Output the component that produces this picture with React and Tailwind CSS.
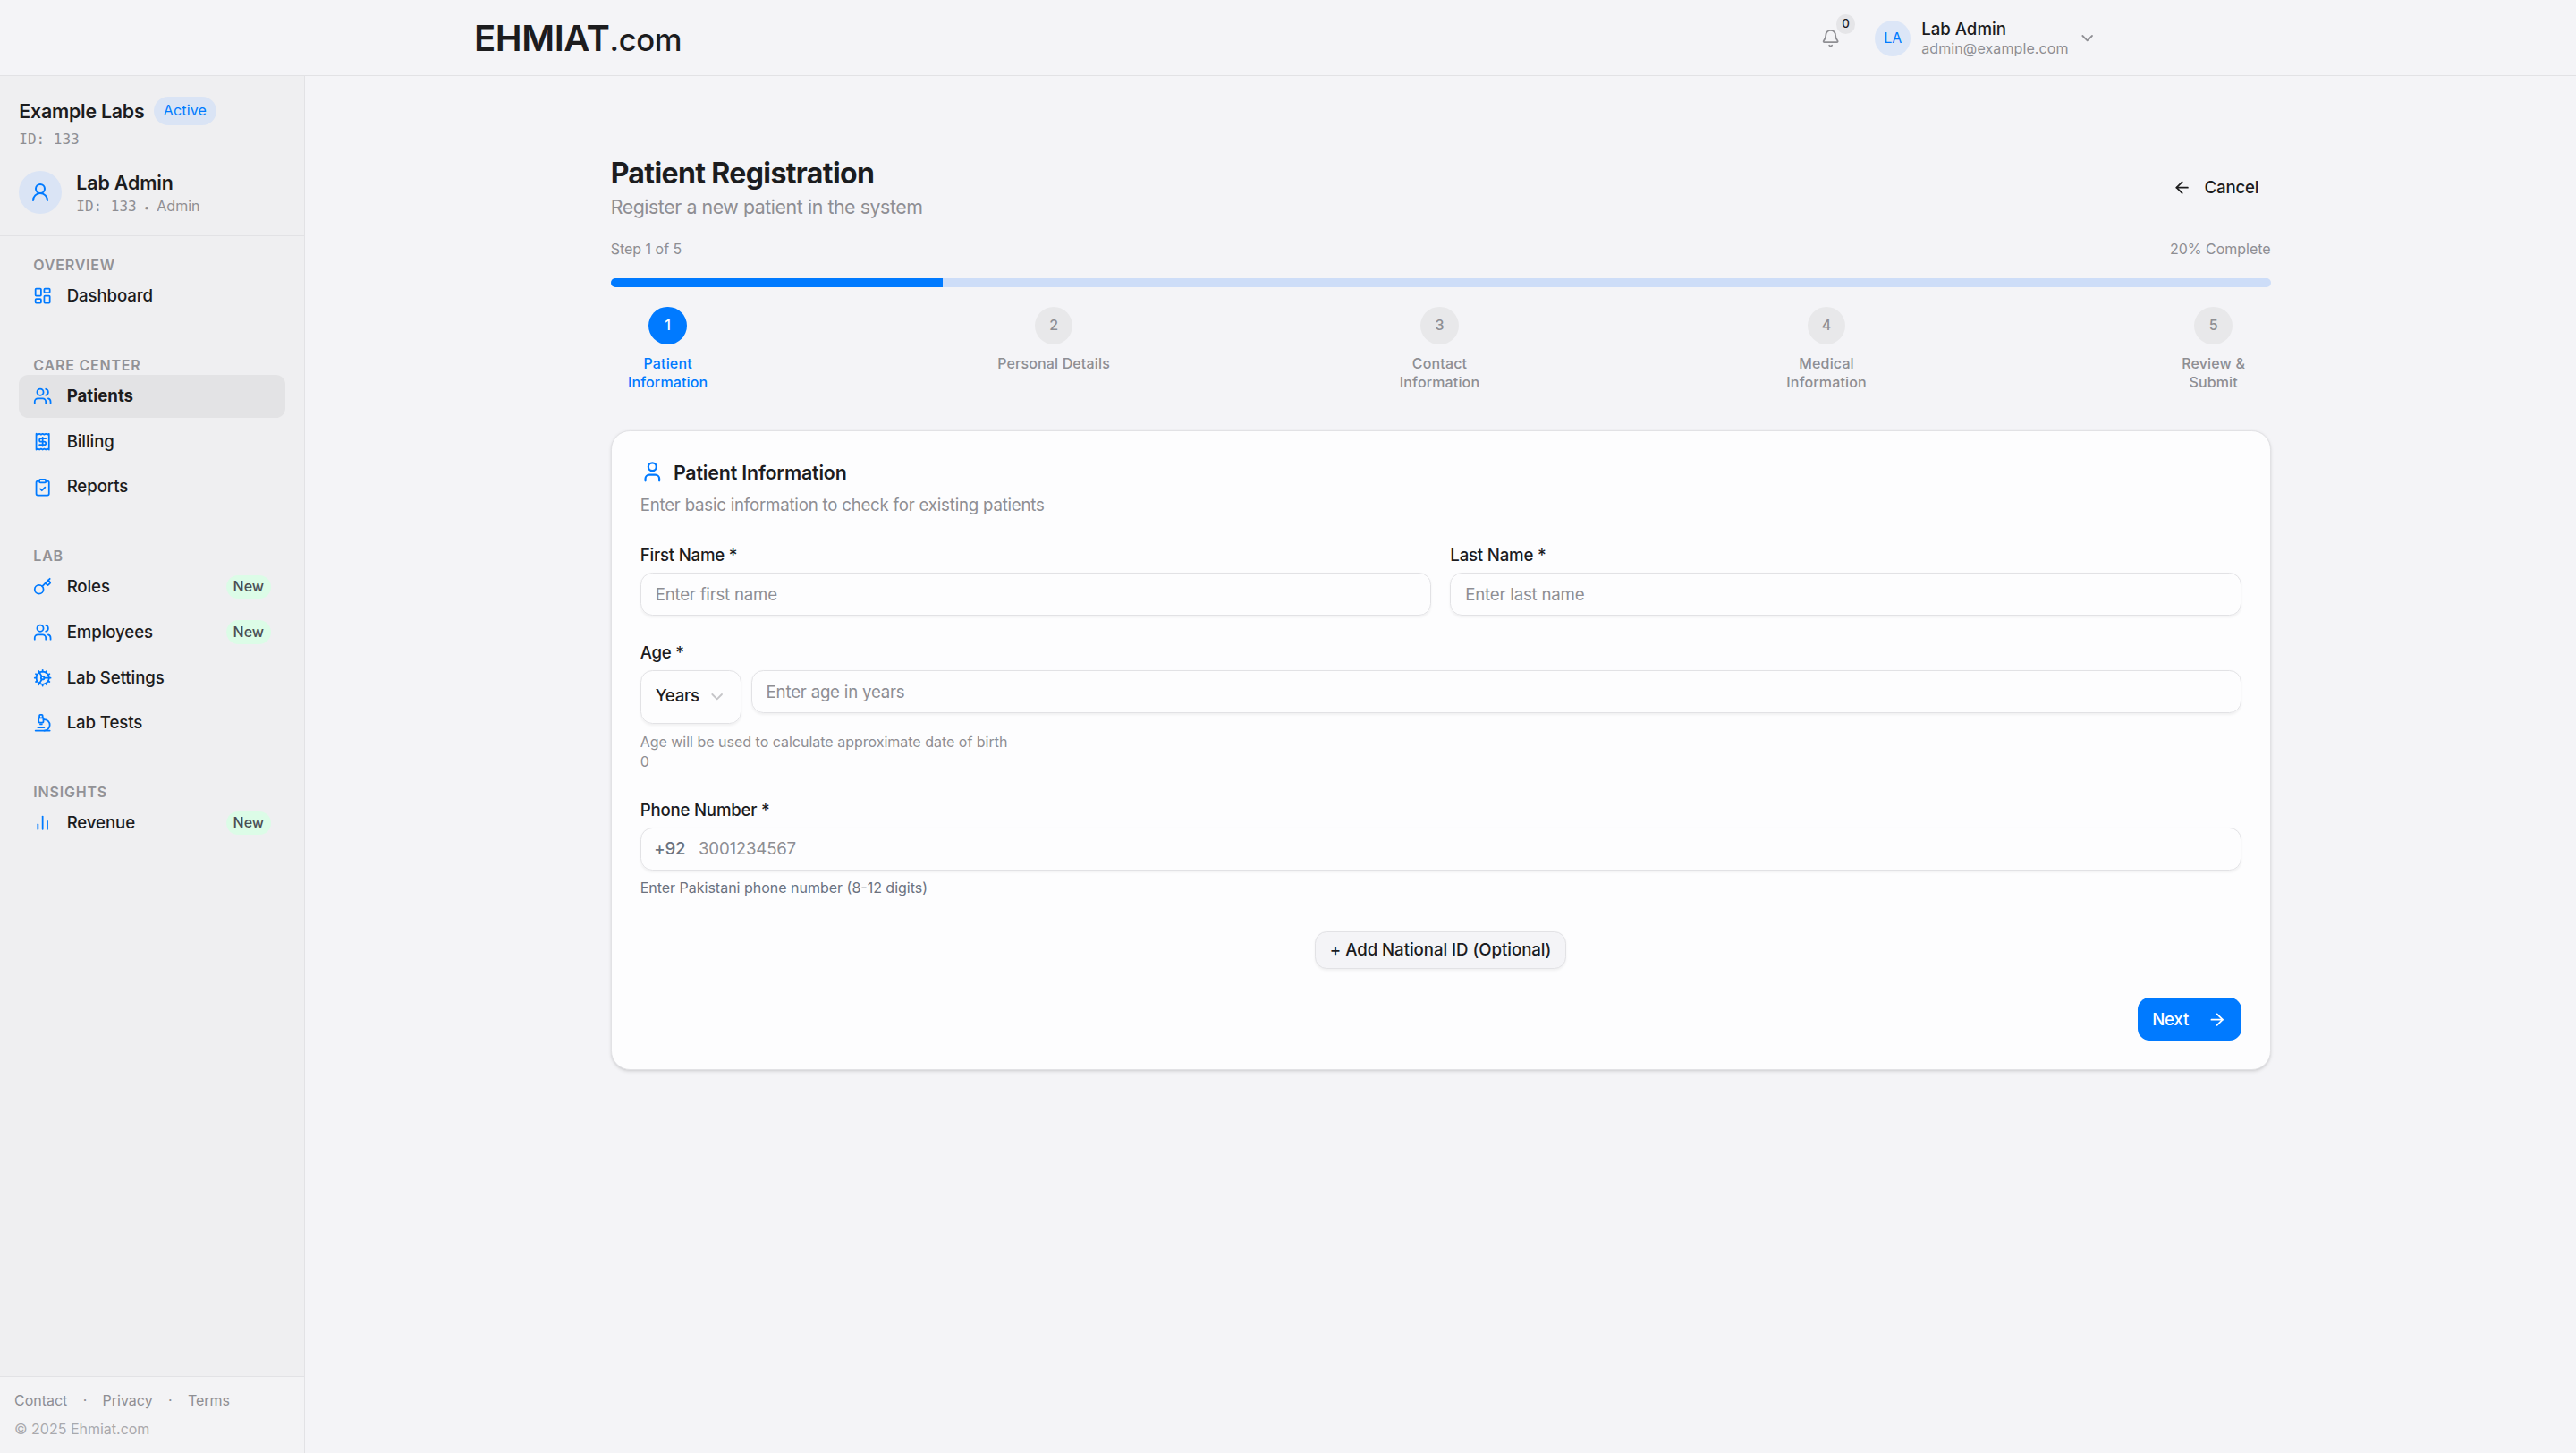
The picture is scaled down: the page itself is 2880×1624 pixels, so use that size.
import { useState } from "react";
import {
  ArrowLeft, ArrowRight, Bell, ChevronDown, ClipboardCheck, Cog, Key,
  LayoutDashboard, Microscope, User, UserRound, Users,
} from "lucide-react";

function ReceiptIcon({ className }) {
  return (
    <svg className={className} viewBox="0 0 24 24" fill="none" stroke="currentColor" strokeWidth="2" strokeLinecap="round" strokeLinejoin="round">
      <path d="M4 2v20l2-1 2 1 2-1 2 1 2-1 2 1 2-1 2 1V2l-2 1-2-1-2 1-2-1-2 1-2-1-2 1Z" />
      <path d="M16 8h-6a2 2 0 1 0 0 4h4a2 2 0 1 1 0 4H8" />
      <path d="M12 17.5v-11" />
    </svg>
  )
}

function BarsIcon({ className }) {
  return (
    <svg className={className} viewBox="0 0 24 24" fill="none" stroke="currentColor" strokeWidth="2" strokeLinecap="round" strokeLinejoin="round">
      <path d="M18 20V10" />
      <path d="M12 20V4" />
      <path d="M6 20v-6" />
    </svg>
  )
}

const sections = [
  { title: "OVERVIEW", items: [{ name: "Dashboard", icon: LayoutDashboard }] },
  {
    title: "CARE CENTER",
    items: [
      { name: "Patients", icon: Users, active: true },
      { name: "Billing", icon: ReceiptIcon },
      { name: "Reports", icon: ClipboardCheck },
    ],
  },
  {
    title: "LAB",
    items: [
      { name: "Roles", icon: Key, isNew: true },
      { name: "Employees", icon: Users, isNew: true },
      { name: "Lab Settings", icon: Cog },
      { name: "Lab Tests", icon: Microscope },
    ],
  },
  { title: "INSIGHTS", items: [{ name: "Revenue", icon: BarsIcon, isNew: true }] },
];

const steps = ["Patient Information", "Personal Details", "Contact Information", "Medical Information", "Review & Submit"];

function Header() {
  return (
    <header className="h-16 shrink-0 border-b border-[#e2e2e5] pt-px">
      <div className="mx-auto flex h-full w-[1365px] items-center justify-between">
        <div className="text-[30px] leading-none font-semibold tracking-[-0.01em]">EHMIAT<span className="text-[26px] font-medium">.com</span></div>
        <div className="flex items-center pr-[4px]">
          <div className="relative text-[#8e8e93]">
            <Bell className="size-4" />
            <span className="absolute -top-[12px] left-[13px] flex size-4 items-center justify-center rounded-full bg-[#e5e5e8] text-[10px] font-medium text-[#1c1c1e]">0</span>
          </div>
          <div className="ml-[29.5px] flex size-[30px] items-center justify-center rounded-full bg-[#dce6f7] text-xs text-[#007aff]">LA</div>
          <div className="ml-[9px] pt-[3px]">
            <p className="text-sm leading-4 font-medium">Lab Admin</p>
            <p className="text-xs leading-[18px] tracking-[0.0075em] text-[#8e8e93]">admin@example.com</p>
          </div>
          <ChevronDown className="ml-2 size-4 text-[#8e8e93]" />
        </div>
      </div>
    </header>
  )
}

function NavItem({ item }) {
  const Icon = item.icon
  return (
    <a className={item.active ? "flex h-9 items-center gap-3 rounded-lg bg-[#e3e3e5] px-3 font-bold" : "flex h-9 items-center gap-3 rounded-lg px-3 font-medium tracking-[-0.005em]"}>
      <Icon className="size-4 shrink-0 text-[#007aff]" />
      <span className="pt-px text-sm">{item.name}</span>
      {item.isNew && <span className="ml-auto rounded-full bg-[#dcfce7] px-1.5 py-0.5 text-xs tracking-normal text-[#4b4f52]">New</span>}
    </a>
  )
}

function Sidebar() {
  return (
    <aside className="flex w-64 shrink-0 flex-col border-r border-[#e2e2e5] bg-[#efeff1]">
      <div className="border-b border-[#e2e2e5] px-4 pt-[17px] pb-[15px]">
        <div className="flex h-6 items-center gap-2">
          <h2 className="pt-px text-base font-semibold tracking-[-0.01em]">Example Labs</h2>
          <span className="rounded-full bg-[#dae4f5] px-2 py-1 text-xs tracking-[0.01em] text-[#007aff]">Active</span>
        </div>
        <p className="mt-1 font-['DejaVu_Sans_Mono',monospace] text-xs text-[#8e8e93]">ID: 133</p>
        <div className="mt-4 flex items-center gap-3">
          <div className="mb-[1.5px] flex size-9 items-center justify-center rounded-full bg-[#dae4f5]">
            <UserRound className="size-[18px] text-[#007aff]" />
          </div>
          <div>
            <p className="text-base leading-[25px] font-semibold tracking-[-0.005em]">Lab Admin</p>
            <p className="text-xs leading-[15px] text-[#8e8e93]">
              <span className="font-['DejaVu_Sans_Mono',monospace]">ID: 133</span>
              <span className="inline-block w-[17px] text-center text-[8px]">•</span>
              Admin
            </p>
          </div>
        </div>
      </div>
      <nav className="flex flex-1 flex-col gap-8 p-4">
        {sections.map((s) => (
          <div key={s.title}>
            <p className="px-3 text-xs font-semibold tracking-[0.05em] text-[#929296]">{s.title}</p>
            <div className="flex flex-col gap-0.5">
              {s.items.map((item) => <NavItem key={item.name} item={item} />)}
            </div>
          </div>
        ))}
      </nav>
      <footer className="border-t border-[#e2e2e5] bg-[#f3f3f5] p-3 text-xs">
        <div className="flex gap-[13px] text-[#8e8e93]">
          <span>Contact</span><span>·</span><span>Privacy</span><span>·</span><span>Terms</span>
        </div>
        <p className="mt-2 text-[#a9a9ad]">© 2025 Ehmiat.com</p>
      </footer>
    </aside>
  )
}

function Field({ label, placeholder, value, onChange }) {
  return (
    <div className="flex-1">
      <label className="block h-3.5 text-sm leading-4 font-medium">{label}</label>
      <input
        className="mt-2 block h-9 w-full rounded-[10px] border border-[#e2e2e5] px-3 pt-px text-sm shadow-xs outline-none placeholder:text-[#8e8e93]"
        placeholder={placeholder}
        value={value}
        onChange={(e) => onChange(e.target.value)}
      />
    </div>
  )
}

export default function App() {
  const [firstName, setFirstName] = useState('')
  const [lastName, setLastName] = useState('')
  const [age, setAge] = useState('')
  const [phone, setPhone] = useState('')
  const step = 1

  return (
    <div className="flex h-[1218px] w-[2160px] flex-col overflow-hidden bg-[#f4f4f7] font-['Inter',sans-serif] text-[#1c1c1e] [zoom:1.33333]">
      <Header />
      <div className="flex min-h-0 flex-1">
        <Sidebar />
        <main className="flex-1 pt-[65px]">
          <div className="mx-auto w-[1392px]">
            <div className="flex items-center justify-between">
              <div>
                <h1 className="text-2xl leading-[33px] font-bold tracking-[-0.019em]">Patient Registration</h1>
                <p className="text-base leading-[23px] tracking-[-0.02em] text-[#8e8e93]">Register a new patient in the system</p>
              </div>
              <button className="flex h-9 items-center gap-[11px] px-2.5 pt-px text-sm font-medium tracking-[-0.01em]">
                <ArrowLeft className="size-4" />
                Cancel
              </button>
            </div>

            <div className="mt-4 flex justify-between text-xs text-[#8e8e93]">
              <span>Step 1 of 5</span>
              <span>20% Complete</span>
            </div>
            <div className="mt-4 h-2 overflow-hidden rounded-full bg-[#cdddf8]">
              <div className="h-full w-1/5 bg-[#007aff]" />
            </div>

            <div className="mt-4 flex justify-between">
              {steps.map((name, i) => (
                <div key={name} className={i + 1 === step ? "flex flex-col items-center text-[#007aff]" : "flex flex-col items-center text-[#8e8e93]"}>
                  <div className={i + 1 === step ? "flex size-8 items-center justify-center rounded-full bg-[#007aff] text-xs font-medium text-white" : "flex size-8 items-center justify-center rounded-full bg-[#e8e8ea] text-xs font-medium"}>{i + 1}</div>
                  <p className="mt-2 max-w-24 text-center text-xs font-medium tracking-[0.01em]">{name}</p>
                </div>
              ))}
            </div>

            <div className="mt-8 rounded-2xl border border-[#e2e2e5] bg-[#fdfdfe] p-6 tracking-[-0.01em] shadow-sm">
              <div className="flex h-5 gap-2">
                <User className="size-5 text-[#007aff]" />
                <h2 className="text-base leading-[22px] font-semibold tracking-[-0.007em]">Patient Information</h2>
              </div>
              <p className="mt-2 text-sm text-[#8e8e93]">Enter basic information to check for existing patients</p>

              <div className="mt-6 flex gap-4">
                <Field label="First Name *" placeholder="Enter first name" value={firstName} onChange={setFirstName} />
                <Field label="Last Name *" placeholder="Enter last name" value={lastName} onChange={setLastName} />
              </div>

              <div className="mt-6">
                <label className="block h-3.5 text-sm leading-4 font-medium">Age *</label>
                <div className="mt-2 flex items-start gap-2">
                  <button className="flex h-[45px] w-[85px] items-center justify-between rounded-[10px] border border-[#e2e2e5] px-3 text-sm font-medium shadow-xs">
                    Years
                    <ChevronDown className="size-4 text-[#8e8e93] opacity-50" />
                  </button>
                  <input
                    className="h-9 flex-1 rounded-[10px] border border-[#e2e2e5] px-3 pt-px text-sm shadow-xs outline-none placeholder:text-[#8e8e93]"
                    placeholder="Enter age in years"
                    value={age}
                    onChange={(e) => setAge(e.target.value)}
                  />
                </div>
                <p className="mt-2 text-xs tracking-normal text-[#8e8e93]">Age will be used to calculate approximate date of birth</p>
                <p className="text-xs text-[#8e8e93]">0</p>
              </div>

              <div className="mt-[25px]">
                <label className="block h-3.5 text-sm leading-4 font-medium">Phone Number *</label>
                <div className="mt-2 flex h-9 items-center gap-[11px] rounded-[10px] border border-[#e2e2e5] pt-px pr-3 pl-[11px] text-sm shadow-xs">
                  <span className="font-medium text-[#6b7280]">+92</span>
                  <input className="flex-1 outline-none placeholder:text-[#8e8e93]" placeholder="3001234567" value={phone} onChange={(e) => setPhone(e.target.value)} />
                </div>
                <p className="mt-[7px] text-xs tracking-normal text-[#6b7280]">Enter Pakistani phone number (8-12 digits)</p>
              </div>

              <div className="mt-7 flex justify-center">
                <button className="h-8 rounded-[10px] border border-[#e2e2e5] bg-[#f4f4f7] px-3 pt-px text-sm font-medium tracking-[-0.003em] shadow-xs">+ Add National ID (Optional)</button>
              </div>
              <div className="mt-6 flex justify-end">
                <button className="flex h-9 items-center gap-4 rounded-[10px] bg-[#007aff] px-3 text-sm font-medium text-white">
                  <span className="pt-px">Next</span>
                  <ArrowRight className="size-4" />
                </button>
              </div>
            </div>
          </div>
        </main>
      </div>
    </div>
  );
}
